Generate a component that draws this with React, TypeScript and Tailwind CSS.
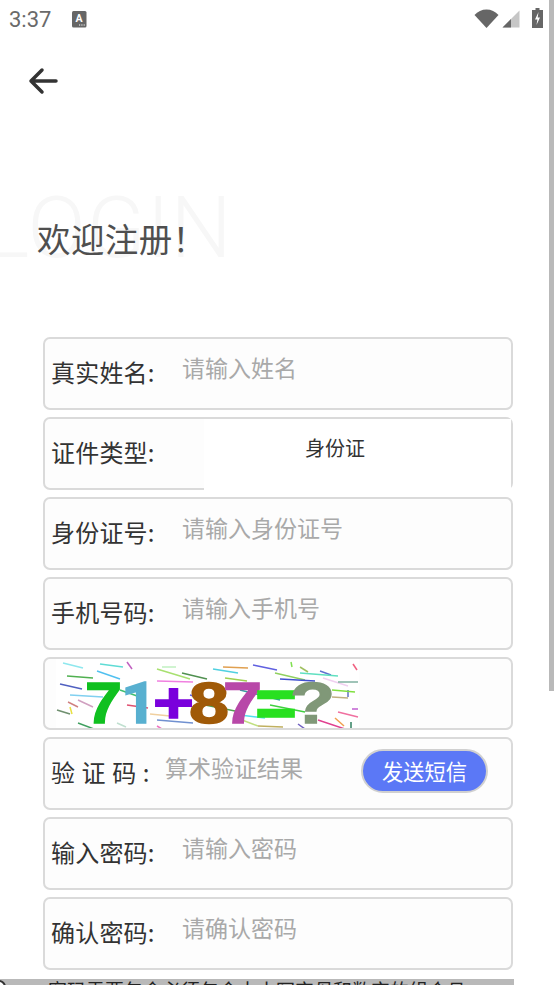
import React from "react";

const cjk = "font-['Noto_Sans_CJK_SC','Noto_Sans',sans-serif]";

function Row({ label, ph }: { label: string; ph: string }) {
  return (
    <div className="flex h-[73px] w-[470px] rounded-[7px] border-2 border-[#dadada] bg-[#fdfdfd] pl-[6px]">
      <div className="w-[131px] pt-[13px] text-[24px] leading-[40px] tracking-[0.2px] text-[#333]">{label}</div>
      <div className="pt-[8px] text-[23px] leading-[40px] text-[#a9a9a9]">{ph}</div>
    </div>
  );
}

const lines: [number, number, number, number, string][] = [
  [63, 663, 83, 668, "#8ee8ee"], [100, 664, 123, 667, "#5fdcd5"], [127, 662, 132, 669, "#c060c0"],
  [97, 671, 120, 679, "#50c0f0"], [67, 676, 93, 678, "#50b050"], [60, 684, 82, 689, "#5060c0"],
  [157, 669, 190, 679, "#a8e070"], [162, 667, 176, 667, "#c0f0c0"], [182, 673, 207, 679, "#509050"],
  [157, 681, 193, 682, "#f080e0"], [70, 695, 103, 697, "#80d0f0"], [78, 700, 93, 707, "#d0a0c0"],
  [68, 702, 78, 707, "#d08080"], [57, 710, 70, 714, "#709070"], [70, 707, 72, 714, "#e8e040"],
  [78, 723, 94, 729, "#40a060"], [117, 723, 126, 727, "#c0e0d0"], [157, 726, 162, 729, "#f070c0"],
  [157, 720, 193, 723, "#7090d0"], [150, 714, 170, 716, "#f0d0a0"], [127, 705, 148, 708, "#e05070"],
  [213, 669, 238, 673, "#50d0e0"], [223, 667, 248, 668, "#e0a050"], [253, 665, 277, 670, "#6060e0"],
  [291, 662, 292, 667, "#80e050"], [300, 667, 308, 672, "#a0c060"], [320, 671, 331, 675, "#6070d0"],
  [300, 673, 338, 676, "#60e0c0"], [275, 673, 305, 680, "#90d060"], [280, 679, 315, 681, "#4050d0"],
  [323, 678, 348, 686, "#f0d0f0"], [338, 682, 358, 682, "#80b0a0"], [353, 664, 357, 670, "#f06080"],
  [348, 690, 348, 697, "#6070c0"], [332, 690, 355, 692, "#80e040"], [332, 697, 348, 698, "#c0b080"],
  [352, 709, 358, 709, "#c060d0"], [338, 712, 358, 717, "#f070a0"], [335, 718, 344, 726, "#f0a050"],
  [351, 722, 351, 729, "#308060"], [318, 720, 345, 729, "#e04090"], [298, 724, 305, 729, "#7060c0"],
  [258, 726, 283, 727, "#c0b060"], [242, 720, 258, 726, "#c0e080"], [225, 678, 247, 681, "#a0d050"],
  [190, 695, 215, 702, "#6060e0"], [205, 705, 240, 712, "#50a050"], [240, 690, 280, 700, "#30a0a0"],
  [270, 705, 305, 712, "#40d040"], [240, 715, 265, 718, "#50e0f0"], [120, 690, 140, 697, "#40c070"],
];

const glyphs: [string, number, number, string, string, number, number][] = [
  ["7", 85, 37, "#10c020", "Liberation Sans", 58, 723],
  ["1", 121, 36, "#58b0d0", "Roboto", 58, 723],
  ["+", 153, 41, "#7a00dc", "Liberation Sans", 58, 723],
  ["8", 189, 40, "#a05a08", "Liberation Sans", 58, 723],
  ["7", 223, 39, "#b848a8", "Liberation Sans", 58, 723],
  ["=", 255, 42, "#28e020", "Liberation Sans", 68, 727],
  ["?", 290, 45, "#809878", "Liberation Sans", 58, 723],
];

export default function App() {
  return (
    <div className={`relative h-[985px] w-[554px] overflow-hidden bg-white ${cjk}`}>
      {/* status bar */}
      <div className="flex h-[38px] items-center pl-[9px] pr-[11px] font-['Roboto',sans-serif] text-[22px] text-[#6a6a6a]">
        <span>3:37</span>
        <svg className="ml-[21px]" width="15" height="17" viewBox="0 0 15 17">
          <rect x="0" y="0" width="14.5" height="16.5" rx="1.5" fill="#666" />
          <text x="7" y="10.5" textAnchor="middle" fontSize="10.5" fontWeight="700" fill="#fff" fontFamily="Roboto">A</text>
          <path d="M7 14h1.2M9.3 14h1.2M11.6 14h1.2" stroke="#fff" strokeWidth="1.2" />
        </svg>
        <div className="ml-auto flex items-center pb-[2px]">
          <svg width="25" height="19" viewBox="0 0 25 19">
            <path d="M0.5 6C3.5 2.5 8 0.5 12.5 0.5s9 2 12 5.5L12.5 19z" fill="#666" />
          </svg>
          <svg className="ml-[3px]" width="18" height="19" viewBox="0 0 18 19">
            <path d="M0.5 18.5L17.5 1.5V18.5z" fill="#c6c6c6" />
            <path d="M0.5 18.5L9 10V18.5z" fill="#666" />
          </svg>
          <svg className="ml-[12px]" width="11" height="20" viewBox="0 0 11 20">
            <path d="M3.5 0h4v2H11v18H0V2h3.5z" fill="#666" />
            <path d="M6.5 4L3 11.5h2.4L4.5 17 8 9.5H5.7z" fill="#fff" />
          </svg>
        </div>
      </div>

      {/* scrollbar */}
      <div className="absolute right-0 top-0 h-[691px] w-[5px] bg-[#b9b9b9]" />

      {/* back */}
      <svg className="ml-[28px] mt-[28px] block" width="32" height="30" viewBox="0 0 32 30">
        <path d="M3 15H28M14 4L3 15L14 26" fill="none" stroke="#333" strokeWidth="3.5" strokeLinecap="round" strokeLinejoin="round" />
      </svg>

      {/* title */}
      <div className="relative mt-[119px] h-[70px]">
        <div className="absolute left-[-16px] top-[-37px] font-['Roboto',sans-serif] text-[86px] font-light leading-[100px] tracking-[1px] text-[#f7f7f7]">
          LOGIN
        </div>
        <div className="absolute left-[37px] top-[0px] text-[33.5px] leading-[46px] tracking-[0.4px] text-[#4f4f4f]">欢迎注册！</div>
      </div>

      {/* form */}
      <div className="ml-[43px] mt-[52px] flex flex-col gap-[7px]">
        <Row label="真实姓名:" ph="请输入姓名" />

        <div className="relative flex h-[73px] w-[470px] rounded-[7px] border-2 border-[#dadada] bg-[#fdfdfd] pl-[6px]">
          <div className="pt-[13px] text-[24px] leading-[40px] tracking-[0.2px] text-[#333]">证件类型:</div>
          <div className="absolute bottom-[-2px] left-[159px] right-0 top-0 bg-white pl-[101px] pt-[9px] text-[20px] leading-[40px] text-[#333]">
            身份证
          </div>
        </div>

        <Row label="身份证号:" ph="请输入身份证号" />
        <Row label="手机号码:" ph="请输入手机号" />

        <div className="h-[73px] w-[470px] rounded-[7px] border-2 border-[#dadada] bg-[#fdfdfd] pl-[11px]">
          <svg width="303" height="69" viewBox="56 659 303 69" className="block bg-white blur-[0.4px]">
            {lines.map(([a, b, c, d, s], i) => (
              <line key={i} x1={a} y1={b} x2={c} y2={d} stroke={s} strokeWidth="1.5" />
            ))}
            {glyphs.map(([g, x, w, f, fam, size, y], i) => (
              <text
                key={i}
                x={x}
                y={y}
                fontSize={size}
                fontWeight="700"
                fill={f}
                stroke={f}
                strokeWidth="1.5"
                textLength={w}
                lengthAdjust="spacingAndGlyphs"
                fontFamily={fam}
              >
                {g}
              </text>
            ))}
          </svg>
        </div>

        <div className="flex h-[73px] w-[470px] rounded-[7px] border-2 border-[#dadada] bg-[#fdfdfd] pl-[6px]">
          <div className="w-[114px] whitespace-pre pt-[13px] text-[24px] leading-[40px] tracking-[0.6px] text-[#333]">验 证 码 :</div>
          <div className="pt-[8px] text-[23px] leading-[40px] text-[#a9a9a9]">算术验证结果</div>
          <div className="ml-[58px] mt-[10px] flex h-[44px] w-[127px] items-center justify-center rounded-full border-2 border-[#d0d0d0] bg-[#5b78f6] text-[21.3px] text-white">
            发送短信
          </div>
        </div>

        <Row label="输入密码:" ph="请输入密码" />
        <Row label="确认密码:" ph="请确认密码" />
      </div>

      {/* clipped agreement strip */}
      <div className="relative mt-[9px] h-[20px] w-[514px] bg-[#b9b9b9] pl-[48px] text-[19px] leading-[21px] text-[#222]">
        <div className="absolute left-[-8px] top-[1px] h-[14px] w-[14px] rounded-full border-2 border-[#333] bg-white" />
        密码需要包含必须包含大小写字母和数字的组合且
      </div>
    </div>
  );
}
